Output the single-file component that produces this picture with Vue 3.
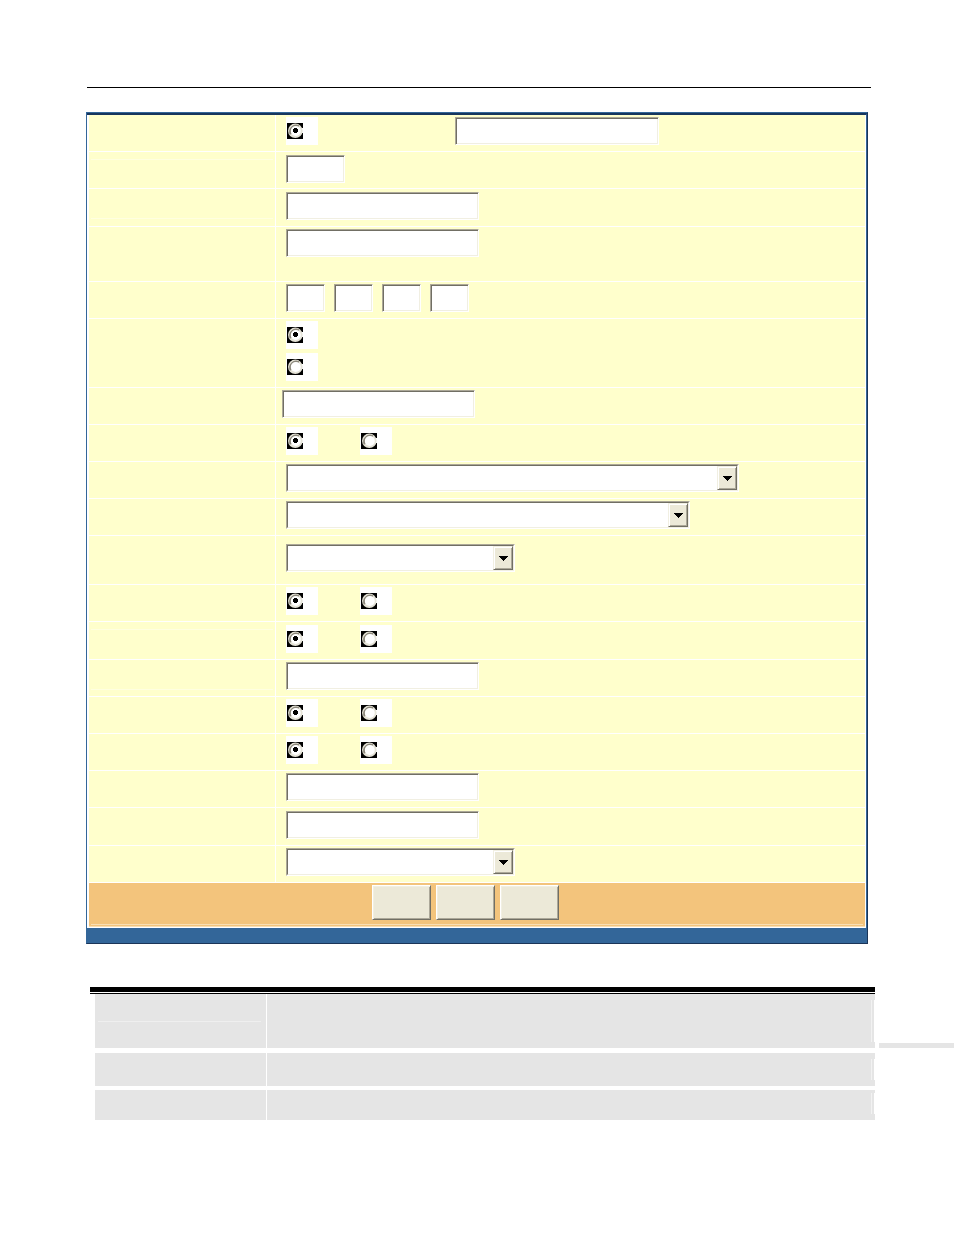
<script setup>
import { reactive } from 'vue'

const rows = [
  { id: 'source', kind: 'mixed', size: 'normal' },
  { id: 'number', kind: 'entries', widths: ['w-short'], size: 'normal', drop: true, mark: 'mark-top' },
  { id: 'name', kind: 'entries', widths: ['w-field'], size: 'tall', drop: true, mark: 'mark-bottom' },
  { id: 'detail', kind: 'entries', widths: ['w-field'], size: 'double' },
  { id: 'address', kind: 'entries', widths: ['w-octet', 'w-octet', 'w-octet', 'w-octet'], size: 'normal' },
  { id: 'method', kind: 'stack', size: 'stacked' },
  { id: 'value', kind: 'entries', widths: ['w-field'], size: 'normal', outdent: true },
  { id: 'enable', kind: 'pair', size: 'normal' },
  { id: 'profile', kind: 'choice', widths: ['w-xl'], size: 'normal' },
  { id: 'group', kind: 'choice', widths: ['w-lg'], size: 'normal' },
  { id: 'mode', kind: 'choice', widths: ['w-md'], size: 'roomy' },
  { id: 'option-a', kind: 'pair', size: 'normal' },
  { id: 'option-b', kind: 'pair', size: 'tall', drop: true, mark: 'mark-top' },
  { id: 'port', kind: 'entries', widths: ['w-field'], size: 'normal', mark: 'mark-bottom' },
  { id: 'option-c', kind: 'pair', size: 'normal' },
  { id: 'option-d', kind: 'pair', size: 'normal' },
  { id: 'minimum', kind: 'entries', widths: ['w-field'], size: 'normal' },
  { id: 'maximum', kind: 'entries', widths: ['w-field'], size: 'tall', drop: true },
  { id: 'type', kind: 'choice', widths: ['w-md'], size: 'normal' }
]

const choices = reactive({})
rows.forEach((row) => { choices[row.id] = 0 })

const radioCount = { mixed: 1, stack: 2, pair: 2 }
const actions = ['Apply', 'Reset', 'Cancel']
</script>

<template>
  <main class="page">
    <hr class="rule" />
    <form class="panel" @submit.prevent>
      <div class="rows">
        <div v-for="row in rows" :key="row.id" class="row" :class="row.size">
          <div class="name" :class="row.mark"></div>
          <div class="controls" :class="[row.kind, { drop: row.drop, outdent: row.outdent }]">
            <label v-for="n in radioCount[row.kind] || 0" :key="n" class="radio">
              <input v-model="choices[row.id]" type="radio" :name="row.id" :value="n - 1" :aria-label="row.id + ' ' + n" />
              <svg width="16" height="16" viewBox="0 0 16 16" aria-hidden="true">
                <path fill="#000" d="M0 0h16v16H0z" />
                <path fill="#fff" d="M15 5h1v5h-1z" />
                <circle cx="8.3" cy="7.8" r="7.3" fill="#e6e4d8" />
                <path fill="none" stroke="#8c887c" stroke-width="2" d="M3.8 11.2A6 6 0 0 1 11.8 3.2" />
                <circle cx="8.8" cy="8" r="5" fill="#fff" />
                <path v-if="choices[row.id] === n - 1" fill="#000" shape-rendering="crispEdges" d="M7 5h3v1h1v3h-1v1H7V9H6V6h1z" />
              </svg>
            </label>
            <input v-if="row.kind === 'mixed'" class="field w-source" type="text" aria-label="source name" />
            <template v-if="row.kind === 'entries'">
              <input v-for="(w, i) in row.widths" :key="i" class="field" :class="w" type="text" :aria-label="row.id + ' ' + (i + 1)" />
            </template>
            <div v-if="row.kind === 'choice'" class="select" :class="row.widths">
              <select :aria-label="row.id"><option></option></select>
              <span class="arrow">
                <svg width="9" height="5" viewBox="0 0 9 5" aria-hidden="true" shape-rendering="crispEdges">
                  <path d="M0 0h9v1H8v1H7v1H6v1H5v1H4V4H3V3H2V2H1V1H0z" />
                </svg>
              </span>
            </div>
          </div>
        </div>
        <div class="actions">
          <button v-for="a in actions" :key="a" type="button" :aria-label="a"></button>
        </div>
      </div>
      <div class="footer"></div>
    </form>

    <section class="lower">
      <div class="summary">
        <div class="entry first"><div class="term"></div><div class="detail"></div></div>
        <div class="entry second"><div class="term"></div><div class="detail"></div></div>
        <div class="entry third"><div class="term"></div><div class="detail"></div></div>
      </div>
      <div class="tab"></div>
    </section>
  </main>
</template>

<style>
body { background: #fff; }
</style>

<style scoped>
.page, .page *, .page *::before, .page *::after { box-sizing: border-box; }
.page {
  padding: 87px 0 115px;
  font: 12px/16px "Liberation Sans", Arial, sans-serif;
}
.rule {
  height: 1px;
  margin: 0 83px 24px 87px;
  border: 0;
  background: #000;
}
.panel {
  margin: 0 86px;
  border: 1px solid #369;
  border-right-color: #1b3558;
  border-bottom-color: #1b3558;
}
.rows {
  padding: 0 1px 1px 2px;
  border-top: 2px solid #17365d;
  border-right: 1px solid #369;
}
.row {
  display: grid;
  grid-template-columns: 186px 1fr;
  column-gap: 1px;
  border-bottom: 1px solid #fff;
}
.normal { min-height: 37px; }
.tall { min-height: 38px; }
.roomy { min-height: 49px; }
.double { min-height: 55px; }
.stacked { min-height: 69px; }
.name, .controls { background-color: #ffc; }
.mark-top, .mark-bottom {
  background-image: linear-gradient(#ffffe0, #ffffe0);
  background-repeat: no-repeat;
  background-size: 182px 1px;
  background-position: 2px 7px;
}
.mark-bottom { background-position: 2px 29px; }
.controls {
  display: flex;
  align-items: flex-start;
  gap: 9px;
  padding: 2px 10px 0;
}
.controls.drop { padding-top: 3px; }
.controls.outdent { padding-left: 6px; }
.controls.pair { gap: 42px; }
.controls.mixed { gap: 137px; }
.controls.stack { flex-direction: column; gap: 4px; }
.roomy .controls { padding-top: 8px; }
.radio {
  position: relative;
  display: block;
  width: 32px;
  height: 28px;
  padding: 6px 0 0 1px;
  background: #fff;
}
.radio input {
  position: absolute;
  inset: 0;
  width: 100%;
  height: 100%;
  margin: 0;
  opacity: 0;
}
.radio svg { display: block; }
.field, .select {
  height: 28px;
  border: 1px solid #aca899;
  border-right-color: #fff;
  border-bottom-color: #fff;
  background: #fff;
}
.field {
  margin: 0;
  padding: 2px 4px;
  border-radius: 0;
  outline: 0;
  font: inherit;
  box-shadow: inset 1px 1px #716f64, inset -1px -1px #f1efe2;
}
.w-source { width: 204px; }
.w-short { width: 59px; }
.w-field { width: 193px; }
.w-octet { width: 39px; }
.w-xl { width: 453px; }
.w-lg { width: 404px; }
.w-md { width: 229px; }
.select { position: relative; }
.select select {
  display: block;
  width: 100%;
  height: 100%;
  padding: 0 22px 0 4px;
  border: 1px solid #716f64;
  border-right-color: #f1efe2;
  border-bottom-color: #f1efe2;
  border-radius: 0;
  outline: 0;
  appearance: none;
  background: #fff;
  font: inherit;
}
.arrow {
  position: absolute;
  top: 1px;
  right: 1px;
  bottom: 1px;
  display: flex;
  align-items: center;
  justify-content: center;
  width: 20px;
  border: 1px solid #f1efe2;
  border-right-color: #716f64;
  border-bottom-color: #716f64;
  background: #ece9d8;
  box-shadow: inset 1px 1px #fff, inset -1px -1px #aca899;
  pointer-events: none;
}
.actions {
  display: flex;
  justify-content: center;
  gap: 5px;
  padding: 2px 24px 7px 0;
  background: linear-gradient(#f9dfb5, #f9dfb5) 2px 41px / calc(100% - 4px) 1px no-repeat,
    linear-gradient(#f9dfb5, #f9dfb5) 0 43px / 100% 1px no-repeat, #f3c47c;
}
.actions button {
  width: 59px;
  height: 35px;
  padding: 0;
  border: 1px solid #fff;
  border-right-color: #716f64;
  border-bottom-color: #716f64;
  border-radius: 0;
  background: #ece9d8;
  box-shadow: inset 1px 1px #f1efe2, inset -1px -1px #aca899;
}
.footer { height: 15px; background: #369; }
.lower {
  display: flex;
  align-items: flex-start;
  gap: 4px;
  margin: 43px 0 0 90px;
}
.summary { flex: 1; }
.summary::before {
  content: "";
  display: block;
  height: 7px;
  border-top: 5px solid #000;
  border-bottom: 1px solid #000;
}
.entry {
  display: grid;
  grid-template-columns: 171px 1fr;
  column-gap: 1px;
  margin-left: 5px;
}
.first { height: 54px; margin-bottom: 5px; }
.second { height: 33px; margin-bottom: 4px; }
.third { height: 30px; }
.term, .detail { background: #e5e5e5; }
.first .term {
  background: linear-gradient(#efefef, #efefef) 3px 27px / 163px 1px no-repeat, #e5e5e5;
}
.detail {
  display: flex;
  justify-content: flex-end;
  padding: 6px 0;
}
.third .detail { padding-top: 3px; }
.detail::after {
  content: "";
  width: 4px;
  border-left: 1px solid #f2f2f2;
  border-right: 1px solid #fff;
}
.tab {
  width: 75px;
  height: 5px;
  margin-top: 56px;
  background: #e5e5e5;
}
</style>
